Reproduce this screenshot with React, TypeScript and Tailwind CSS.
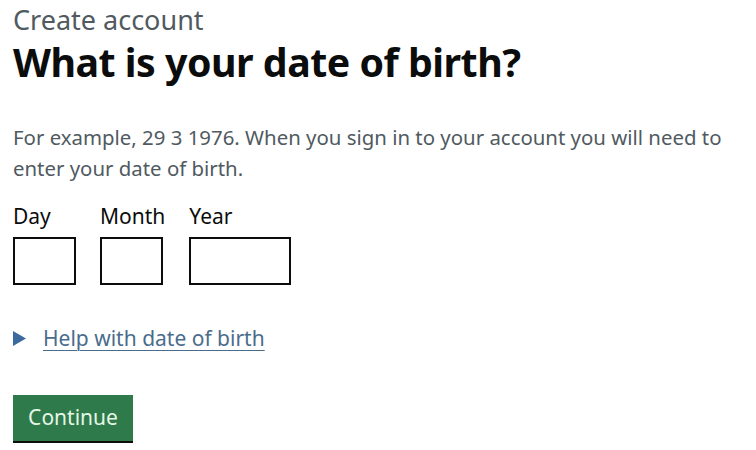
import React from "react";

export default function App() {
  return (
    <main
      className="min-h-[450px] w-[756px] bg-white px-[13px] pt-[4px]"
      style={{ fontFamily: '"Noto Sans", Arial, sans-serif' }}
    >
      <span className="block text-[27px] leading-[32px] text-[#505a5f]">
        Create account
      </span>
      <h1 className="mt-[3px] text-[39.3px] font-bold leading-[46px] text-[#0b0c0c] tracking-[-0.5px]">
        What is your date of birth?
      </h1>

      <p className="mt-[37px] text-[20.4px] leading-[31px] text-[#505a5f]">
        For example, 29 3 1976. When you sign in to your account you will need
        to enter your date of birth.
      </p>

      {/* Date inputs */}
      <div className="mt-[17px] flex">
        <div className="mr-[24px] flex flex-col">
          <label htmlFor="dob-day" className="text-[21px] leading-[30px] text-[#0b0c0c]">
            Day
          </label>
          <input
            id="dob-day"
            className="mt-[6px] h-[48px] w-[63px] border-2 border-[#0b0c0c] bg-white"
          />
        </div>
        <div className="mr-[24px] flex flex-col">
          <label htmlFor="dob-month" className="text-[21px] leading-[30px] text-[#0b0c0c]">
            Month
          </label>
          <input
            id="dob-month"
            className="mt-[6px] h-[48px] w-[63px] border-2 border-[#0b0c0c] bg-white"
          />
        </div>
        <div className="flex flex-col">
          <label htmlFor="dob-year" className="text-[21px] leading-[30px] text-[#0b0c0c]">
            Year
          </label>
          <input
            id="dob-year"
            className="mt-[6px] h-[48px] w-[102px] border-2 border-[#0b0c0c] bg-white"
          />
        </div>
      </div>

      {/* Details */}
      <div className="mt-[38px] flex items-center gap-[17px]">
        <svg width="13" height="15" viewBox="0 0 13 15" className="shrink-0">
          <path d="M0 0 L13 7.5 L0 15 Z" fill="#3d6a9e" />
        </svg>
        <a
          href="#"
          className="text-[21px] leading-[30px] text-[#4a6c8c] underline decoration-1 underline-offset-[4px]"
        >
          Help with date of birth
        </a>
      </div>

      <button
        type="submit"
        className="mt-[42px] h-[46px] w-[120px] bg-[#2f7a4a] text-[21px] text-[#e4f7e6] shadow-[0_2px_0_#0b0c0c]"
      >
        Continue
      </button>
    </main>
  );
}
